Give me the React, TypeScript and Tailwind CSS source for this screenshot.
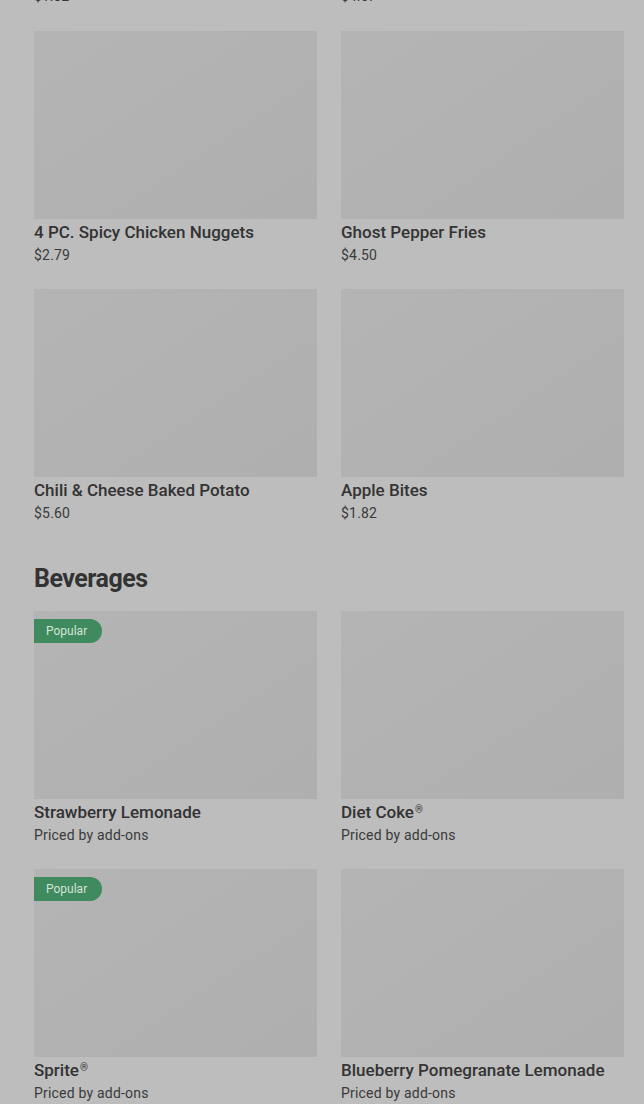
// Menu grid under a dimmed overlay

import React from 'react';

interface MenuItem {
  name: string;
  price: string;
  popular?: boolean;
  registered?: boolean;
}

const sides: MenuItem[] = [
  { name: '4 PC. Spicy Chicken Nuggets', price: '$2.79' },
  { name: 'Ghost Pepper Fries', price: '$4.50' },
  { name: 'Chili & Cheese Baked Potato', price: '$5.60' },
  { name: 'Apple Bites', price: '$1.82' },
];

const beverages: MenuItem[] = [
  { name: 'Strawberry Lemonade', price: 'Priced by add-ons', popular: true },
  { name: 'Diet Coke', price: 'Priced by add-ons', registered: true },
  { name: 'Sprite', price: 'Priced by add-ons', popular: true, registered: true },
  { name: 'Blueberry Pomegranate Lemonade', price: 'Priced by add-ons' },
];

const ItemCard: React.FC<{ item: MenuItem }> = ({ item }) => (
  <div className="flex flex-col mb-[24px]">
    <div className="relative h-[188px] bg-gradient-to-br from-[#b4b4b4] to-[#afafaf]">
      {item.popular && (
        <span className="absolute left-0 top-[8px] h-[24px] w-[68px] flex items-center pl-[12px] rounded-r-full bg-[#3f8a5e] text-[12px] text-[#d3e4d9]">
          Popular
        </span>
      )}
    </div>
    <div className="mt-[1px] h-[24px] leading-[24px] text-[17px] font-medium text-[#333333] whitespace-nowrap">
      {item.name}
      {item.registered && <span className="relative top-[-5px] ml-[1px] text-[10px] text-[#333333]">®</span>}
    </div>
    <div className="mt-[1px] h-[20px] leading-[20px] text-[14px] tracking-[0.2px] text-[#3a3a3a]">{item.price}</div>
  </div>
);

export default function App() {
  return (
    <div
      className="w-[644px] h-[1104px] overflow-hidden bg-[#bdbdbd] pl-[34px] pr-[20px]"
      style={{ fontFamily: 'Roboto, "Liberation Sans", sans-serif' }}
    >
      {/* tail of the previous row, cut off at the top */}
      <div className="grid grid-cols-2 gap-x-[24px] mt-[-14px] mb-[25px] h-[20px] leading-[20px] text-[14px] text-[#3a3a3a]">
        <span>$1.82</span>
        <span>$4.67</span>
      </div>

      <div className="grid grid-cols-2 gap-x-[24px]">
        {sides.map(item => (
          <ItemCard key={item.name} item={item} />
        ))}
      </div>

      <h2 className="mt-[16px] mb-[16px] h-[32px] leading-[32px] text-[25px] font-bold tracking-[-0.5px] text-[#333333]">
        Beverages
      </h2>

      <div className="grid grid-cols-2 gap-x-[24px]">
        {beverages.map(item => (
          <ItemCard key={item.name} item={item} />
        ))}
      </div>
    </div>
  );
}
